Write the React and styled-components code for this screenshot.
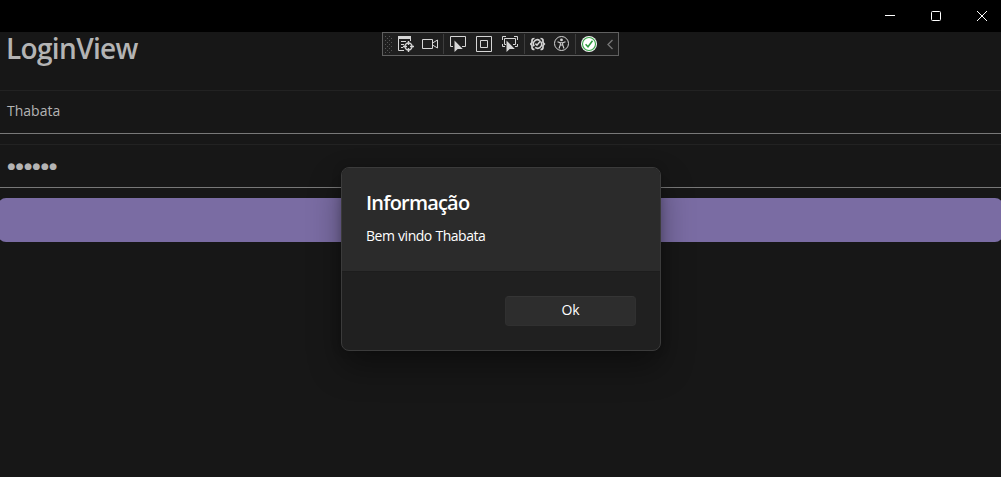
import React from "react";
import styled, { createGlobalStyle } from "styled-components";

const Global = createGlobalStyle`
  * { box-sizing: border-box; }
  body { margin: 0; background: #171717; overflow: hidden; }
`;

const Window = styled.div`
  position: relative;
  display: flex;
  flex-direction: column;
  width: 1001px;
  height: 477px;
  background: #171717;
  color: #b4b4b4;
  font-family: "Open Sans", "Noto Sans", sans-serif;
  overflow: hidden;
`;

const TitleBar = styled.header`
  display: flex;
  justify-content: flex-end;
  height: 32px;
  flex: none;
  background: #000;
`;

const CaptionButton = styled.button`
  display: flex;
  align-items: center;
  justify-content: center;
  width: 46px;
  height: 32px;
  padding: 0;
  border: 0;
  background: none;
  &:last-child { width: 46px; margin-right: -4px; }
`;

const Page = styled.main`
  display: flex;
  flex-direction: column;
`;

const Heading = styled.h1`
  margin: 0;
  height: 58px;
  padding-left: 6px;
  font-size: 28px;
  line-height: 33px;
  font-weight: 600;
  letter-spacing: -0.65px;
`;

const Field = styled.div`
  display: flex;
  align-items: center;
  height: 44px;
  margin-bottom: 10px;
  padding: 0 7px 4px;
  border-top: 1px solid #222;
  border-bottom: 1px solid #787878;
  font-size: 14px;
`;

const Mask = styled.span`
  padding: 4px 0 0 0.5px;
  font-family: "DejaVu Sans", sans-serif;
  font-size: 9px;
  line-height: 12px;
  letter-spacing: 0.5px;
`;

const SubmitButton = styled.button`
  height: 44px;
  margin: 0 -2px;
  border: 0;
  border-radius: 8px;
  background: #7a6ca3;
`;

const DebugBar = styled.div`
  position: absolute;
  top: 32px;
  left: 382px;
  display: flex;
  align-items: center;
  width: 237px;
  height: 24px;
  padding-left: 2px;
  border: 1px solid #606060;
  background: #1f1f1f;
`;

const Tool = styled.span`
  display: flex;
  flex: none;
  align-items: center;
  width: ${(p) => p.$w || 16}px;
  height: 16px;
  margin-left: ${(p) => p.$gap}px;
`;

const Separator = styled.i`
  flex: none;
  width: 1px;
  height: 20px;
  margin-left: ${(p) => p.$gap}px;
  background: #3d3d3d;
`;

const Dialog = styled.section`
  position: absolute;
  top: 167px;
  left: 341px;
  display: flex;
  flex-direction: column;
  width: 320px;
  height: 184px;
  border: 1px solid #3b3b3b;
  border-radius: 8px;
  background: #202020;
  color: #fff;
  overflow: hidden;
  box-shadow: 0 16px 32px rgba(0, 0, 0, 0.37), 0 0 10px rgba(0, 0, 0, 0.2);
`;

const DialogBody = styled.div`
  height: 104px;
  padding: 21px 24px 0;
  border-bottom: 1px solid #1d1d1d;
  background: #2b2b2b;
`;

const DialogTitle = styled.h2`
  margin: 0;
  font-size: 20px;
  line-height: 27px;
  font-weight: 600;
  letter-spacing: -0.8px;
`;

const DialogText = styled.p`
  margin: 10px 0 0;
  font-size: 14px;
  line-height: 20px;
  letter-spacing: -0.48px;
  word-spacing: 0.5px;
`;

const DialogActions = styled.footer`
  display: flex;
  justify-content: flex-end;
  padding: 24px;
`;

const DialogButton = styled.button`
  width: 131px;
  height: 30px;
  padding: 0 0 2px;
  border: 1px solid #303030;
  border-top-color: #353535;
  border-radius: 4px;
  background: #2d2d2d;
  color: #fff;
  font: 14px/20px "Open Sans", sans-serif;
  letter-spacing: -0.2px;
`;

const Icon = ({ w = 16, h = 16, children }) => (
  <svg width={w} height={h} viewBox={`0 0 ${w} ${h}`} fill="none" stroke="#d6d6d6">
    {children}
  </svg>
);

const cursor = "M4.5 4.5V16L7.7 12.9H12.8Z";

const Grip = () => (
  <Icon w={7} h={17}>
    <path
      d="M.5 0V17M4.5 0V17M2.5 2V17M6.5 2V17"
      stroke="#555"
      strokeDasharray="1 3"
    />
  </Icon>
);

const LiveTree = () => (
  <Icon>
    <path d="M0 1.5H13" strokeWidth="3" />
    <path d="M.5 2V14.5H6M3 5.5H8M3 8.5H6M3 11.5H5M12.5 3V5" />
    <circle cx="10.5" cy="10.5" r="3.5" strokeWidth="1.4" />
    <path d="M10.5 5V9M10.5 12V16M5 10.5H9M12 10.5H16" strokeWidth="1.4" />
  </Icon>
);

const Camera = () => (
  <Icon>
    <path d="M.5 3.5H10.5V12.5H.5ZM10.5 7L15.5 4V12L10.5 9" />
  </Icon>
);

const SelectElement = () => (
  <Icon>
    <path d="M3 10.5H.5V.5H15.5V10.5H12" />
    <path d={cursor} fill="#d6d6d6" stroke="none" />
  </Icon>
);

const LayoutAdorners = () => (
  <Icon>
    <path d="M.5.5H15.5V15.5H.5ZM4.5 4.5H11.5V11.5H4.5Z" />
  </Icon>
);

const TrackFocus = () => (
  <Icon>
    <path d="M.5 4V.5H4M12 .5H15.5V4M15.5 8V10.5H13M.5 8V10.5H3M4 8.5H2.5V2.5H13.5V8.5H11" />
    <path d={cursor} fill="#d6d6d6" stroke="none" />
  </Icon>
);

const BindingErrors = () => (
  <Icon>
    <path
      d="M4.5 2.5Q2 2.5 2 4.5V6.5L.7 8L2 9.5V11.5Q2 13.5 4.5 13.5M10.5 2.5Q13 2.5 13 4.5V6.5L14.3 8L13 9.5V11.5Q13 13.5 10.5 13.5"
      strokeWidth="1.7"
    />
    <path d="M9.8 4.6A4 4 0 0 0 4.2 10.2M5.2 11.4A4 4 0 0 0 10.8 5.8" strokeWidth="1.6" />
    <path d="M5.4 7.6L7 9.2L10.6 4.8" strokeWidth="1.5" />
  </Icon>
);

const Accessibility = () => (
  <Icon>
    <circle cx="7.5" cy="7.5" r="7" />
    <circle cx="7.5" cy="3.9" r="1.4" fill="#d6d6d6" stroke="none" />
    <path
      d="M3.5 5.8L6.3 6.8H8.7L11.5 5.8M6.3 6.8V9L5 12.5M8.7 6.8V9L10 12.5M6.3 9H8.7"
      strokeWidth="1.1"
    />
  </Icon>
);

const HotReload = () => (
  <Icon>
    <circle cx="8" cy="8" r="8" fill="#f4f4f4" stroke="none" />
    <circle cx="8" cy="8" r="6.5" fill="#fff" stroke="#36a246" strokeWidth="1.1" />
    <path d="M4.6 8.2L7 10.8L11.5 4.8" stroke="#2f9a40" strokeWidth="1.5" />
  </Icon>
);

const Collapse = () => (
  <Icon w={7} h={16}>
    <path d="M5.5 4L1 8.5L5.5 13" stroke="#777" strokeWidth="1.3" />
  </Icon>
);

export default function App() {
  return (
    <Window>
      <Global />
      <TitleBar>
        <CaptionButton aria-label="Minimize">
          <svg width="10" height="10" stroke="#fff"><path d="M0 4.5H10" /></svg>
        </CaptionButton>
        <CaptionButton aria-label="Maximize">
          <svg width="10" height="10" fill="none" stroke="#fff">
            <rect x=".5" y=".5" width="9" height="9" rx="1" />
          </svg>
        </CaptionButton>
        <CaptionButton aria-label="Close">
          <svg width="10" height="10" stroke="#fff"><path d="M0 0L10 10M10 0L0 10" /></svg>
        </CaptionButton>
      </TitleBar>

      <Page>
        <Heading>LoginView</Heading>
        <Field>Thabata</Field>
        <Field><Mask>●●●●●●</Mask></Field>
        <SubmitButton aria-label="Login" />
      </Page>

      <DebugBar>
        <Tool $w={7} $gap={0}><Grip /></Tool>
        <Tool $gap={6}><LiveTree /></Tool>
        <Tool $gap={8}><Camera /></Tool>
        <Separator $gap={5} />
        <Tool $gap={6}><SelectElement /></Tool>
        <Tool $gap={10}><LayoutAdorners /></Tool>
        <Tool $gap={10}><TrackFocus /></Tool>
        <Separator $gap={6} />
        <Tool $gap={5}><BindingErrors /></Tool>
        <Tool $gap={8}><Accessibility /></Tool>
        <Separator $gap={5} />
        <Tool $gap={5}><HotReload /></Tool>
        <Tool $w={7} $gap={10}><Collapse /></Tool>
      </DebugBar>

      <Dialog role="dialog">
        <DialogBody>
          <DialogTitle>Informação</DialogTitle>
          <DialogText>Bem vindo Thabata</DialogText>
        </DialogBody>
        <DialogActions>
          <DialogButton>Ok</DialogButton>
        </DialogActions>
      </Dialog>
    </Window>
  );
}
